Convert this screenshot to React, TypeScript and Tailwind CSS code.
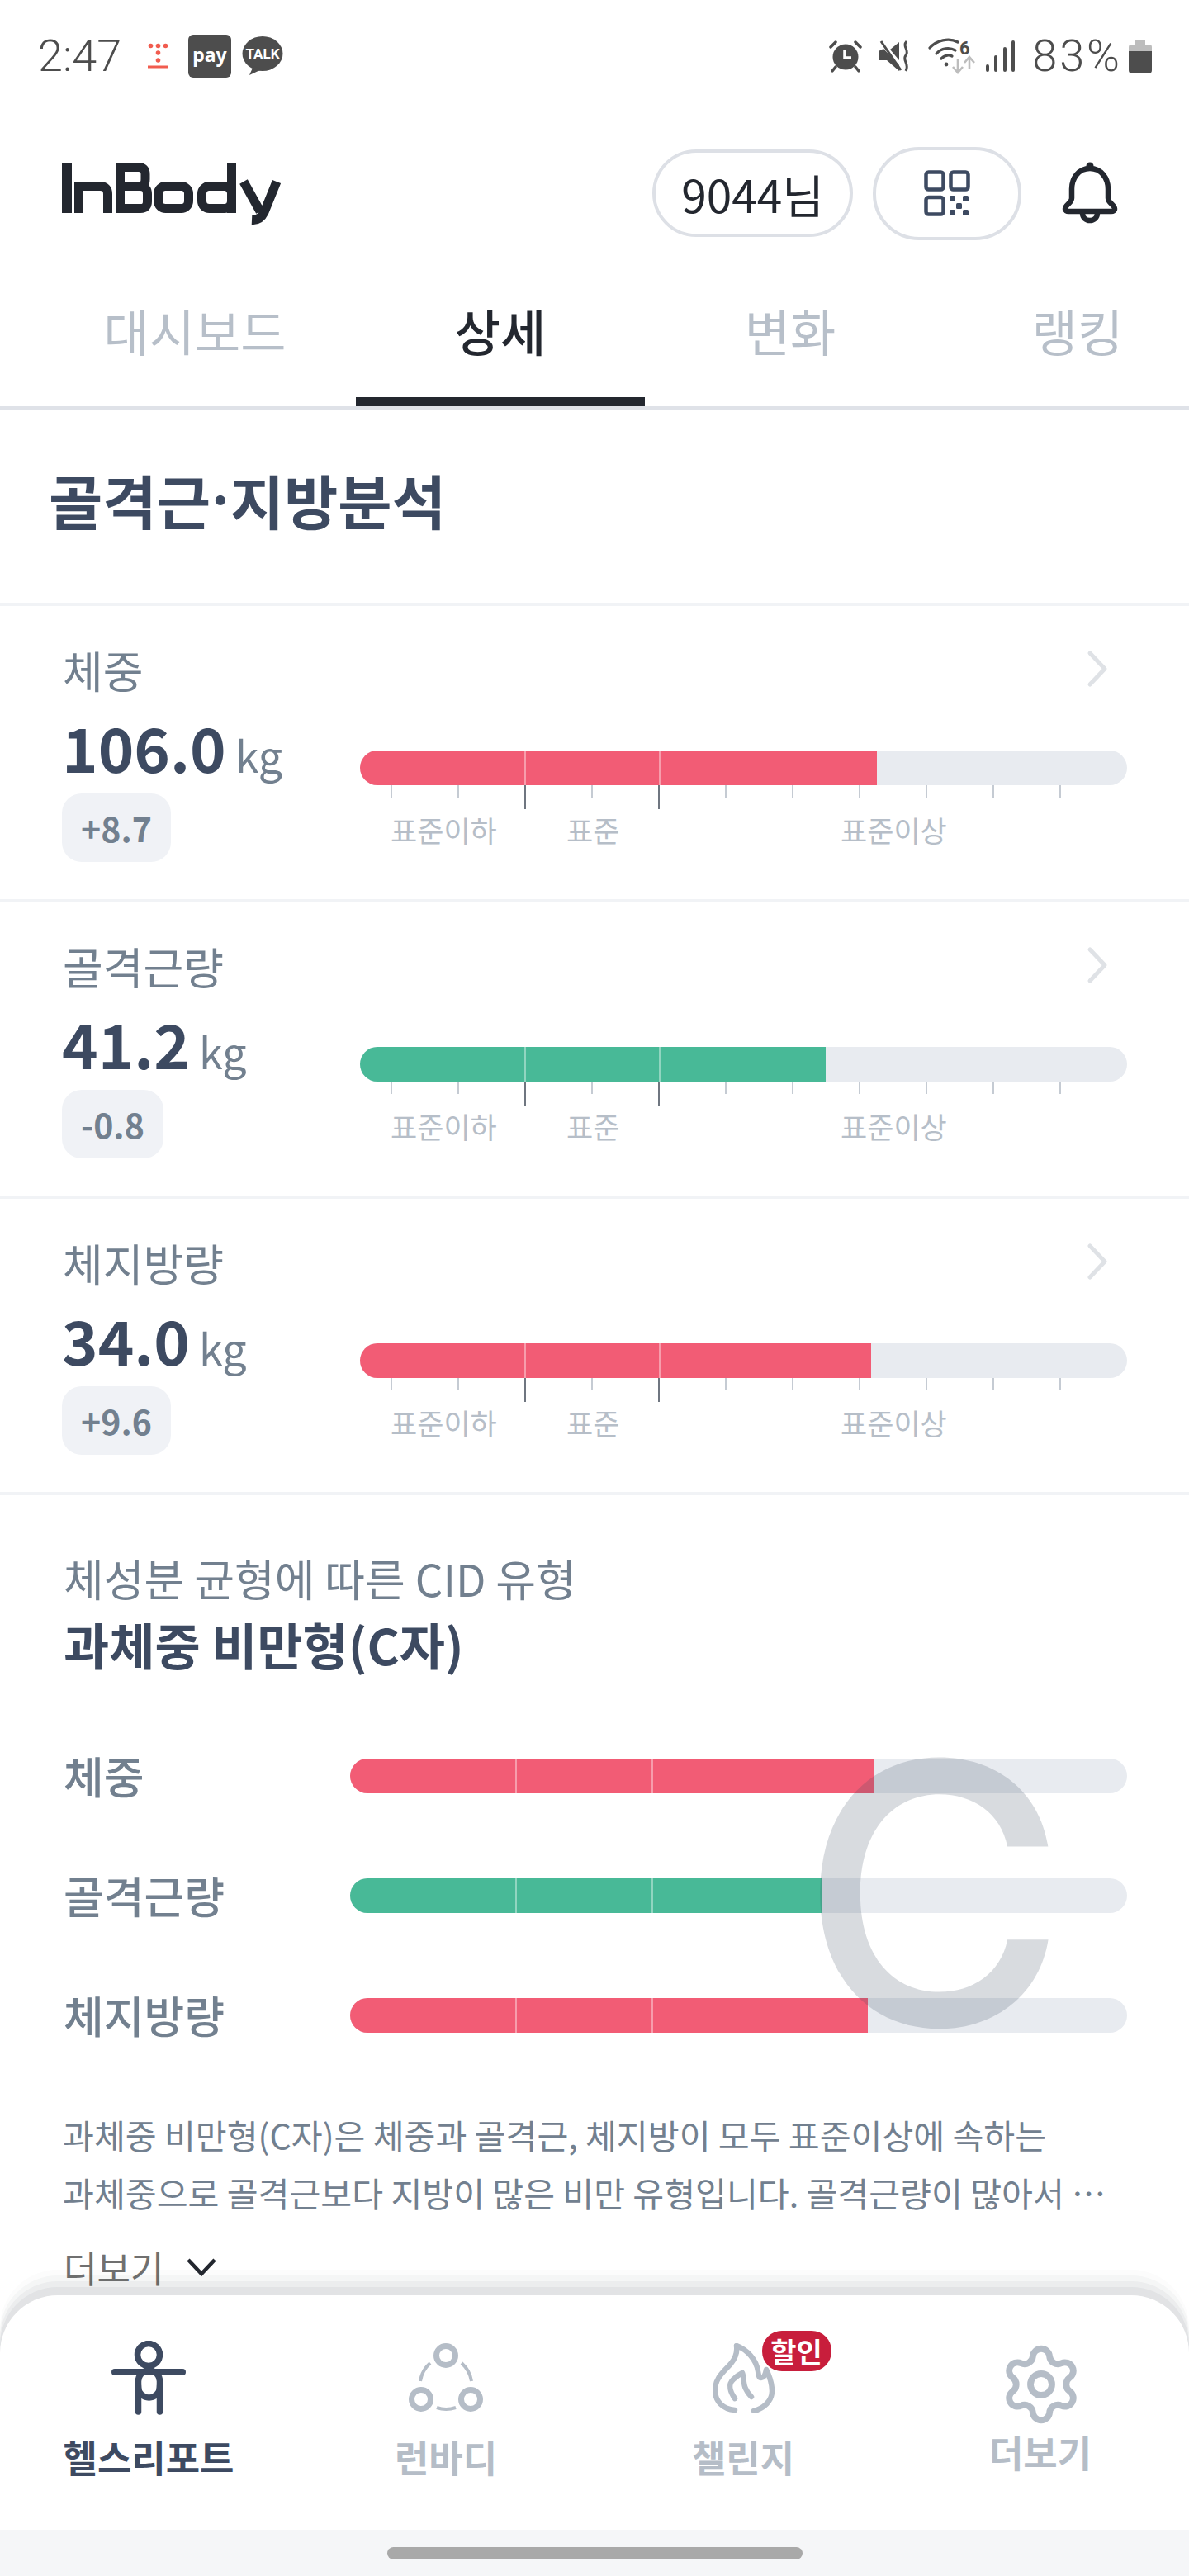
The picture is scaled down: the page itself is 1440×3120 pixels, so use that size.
import { Settings } from "lucide-react";

const rows = [
  { label: "체중", value: "106.0", diff: "+8.7", width: 626, fill: "bg-[#f25c75]" },
  { label: "골격근량", value: "41.2", diff: "-0.8", width: 564, fill: "bg-[#48b997]" },
  { label: "체지방량", value: "34.0", diff: "+9.6", width: 619, fill: "bg-[#f25c75]" },
];

const cidRows = [
  { label: "체중", width: 634, fill: "bg-[#f25c75]" },
  { label: "골격근량", width: 571, fill: "bg-[#48b997]" },
  { label: "체지방량", width: 627, fill: "bg-[#f25c75]" },
];

const ticks = [0, 1, 2, 3, 4, 5, 6, 7, 8, 9, 10];

function StatusBar() {
  return (
    <div className="h-[136px] flex items-center text-[#4d4d4d] font-['Roboto',sans-serif] font-light">
      <span className="ml-[46px] text-[54px] leading-none w-[133px]">2:47</span>
      <svg width="25" height="32" viewBox="0 0 25 32" fill="#f15c4f">
        <circle cx="3.5" cy="3.5" r="2.8" />
        <circle cx="12.5" cy="3.5" r="2.8" />
        <circle cx="21.5" cy="3.5" r="2.8" />
        <circle cx="12.5" cy="12" r="2.8" />
        <circle cx="12.5" cy="21" r="2.8" />
        <rect x="0" y="27.5" width="25" height="3" />
      </svg>
      <div className="ml-[24px] w-[52px] h-[52px] rounded-md bg-[#4d4d4d] flex items-center justify-center text-white text-[23px] font-bold font-['Noto_Sans',sans-serif] pb-[4px]">
        pay
      </div>
      <svg className="ml-[13px]" width="50" height="48" viewBox="0 0 50 48">
        <ellipse cx="25" cy="21" rx="24.5" ry="21" fill="#4d4d4d" />
        <path d="M14 36 L9 47 L24 40 Z" fill="#4d4d4d" />
        <text x="25" y="27" textAnchor="middle" fontSize="17" fontWeight="700" fill="#fff" fontFamily="Roboto, sans-serif">TALK</text>
      </svg>

      <div className="ml-auto flex items-center">
        <svg width="40" height="40" viewBox="0 0 40 40" fill="none" stroke="#4d4d4d">
          <circle cx="20" cy="21" r="15.5" fill="#4d4d4d" stroke="none" />
          <path d="M19 12 V22 H27" stroke="#fff" strokeWidth="3.5" />
          <path d="M2 9 L8 3 M38 9 L32 3 M8 33 L4 38 M32 33 L36 38" strokeWidth="3.5" strokeLinecap="round" />
        </svg>
        <svg className="ml-[20px]" width="40" height="40" viewBox="0 0 40 40" fill="none">
          <path d="M6 11 L0 14 V25 H10 L25 38 V31 Z" fill="#4d4d4d" />
          <path d="M14 12 L25 3 V25 Z" fill="#4d4d4d" />
          <path d="M3 2 L27 37" stroke="#4d4d4d" strokeWidth="3" />
          <path d="M34 2 C28 8 38 13 33 19 C28 25 38 29 33 38" stroke="#4d4d4d" strokeWidth="3" />
        </svg>
        <svg className="ml-[20px]" width="58" height="44" viewBox="0 0 58 44" fill="none">
          <path d="M2 12 C10 3 25 -1 36 5" stroke="#4d4d4d" strokeWidth="3.2" strokeLinecap="round" />
          <path d="M10 19 C16 12 26 11 33 15" stroke="#4d4d4d" strokeWidth="3.2" strokeLinecap="round" />
          <path d="M16 25 C20 21 25 20 29 22" stroke="#4d4d4d" strokeWidth="3.2" strokeLinecap="round" />
          <circle cx="22" cy="32" r="2.4" fill="#4d4d4d" />
          <text x="38" y="20" fontSize="22" fontWeight="700" fill="#4d4d4d" fontFamily="Roboto, sans-serif">6</text>
          <path d="M36 25 V41 M30 35 L36 42 L42 35" stroke="#bdbdbd" strokeWidth="2.6" />
          <path d="M50 38 V24 M44 30 L50 23 L56 30" stroke="#bdbdbd" strokeWidth="2.6" />
        </svg>
        <svg className="ml-[11px]" width="37" height="40" viewBox="0 0 37 40" stroke="#4d4d4d" strokeWidth="4" strokeLinecap="round">
          <path d="M3 32 V37 M13 21 V37 M24 11 V37 M34 3 V37" />
        </svg>
        <span className="ml-[20px] text-[54px] leading-none tracking-[3px]">83%</span>
        <svg className="ml-[8px] mr-[45px]" width="28" height="41" viewBox="0 0 28 41">
          <path d="M8 0 H20 V6 H8 Z M3 6 H25 Q28 6 28 9 V14 H0 V9 Q0 6 3 6 Z" fill="#bdbdbd" />
          <path d="M0 14 H28 V37 Q28 41 24 41 H4 Q0 41 0 37 Z" fill="#4d4d4d" />
        </svg>
      </div>
    </div>
  );
}

function Header() {
  return (
    <div className="h-[196px] flex items-center pl-[75px] pr-[86px]">
      {/* logo */}
      <svg width="266" height="75" viewBox="75 196 266 75" fill="none" stroke="#23272f" strokeWidth="11">
        <rect x="75" y="196" width="12" height="61" fill="#23272f" stroke="none" />
        <path d="M95.5 257 V224.5 H121 Q130.5 224.5 130.5 234 V257" />
        <path d="M145.5 201.5 H168 Q176 201.5 176 210 V216 Q176 224 170 224.5 Q178.5 225 178.5 234 V243 Q178.5 251.5 170 251.5 H145.5 Z M146 224.5 H170" />
        <rect x="191.5" y="224.5" width="37" height="27" rx="9" />
        <rect x="244.5" y="224.5" width="36" height="27" rx="9" />
        <path d="M280.5 196 V257" />
        <path d="M295 219 L315 255 M335 219 L320 256 Q315 266 305 265.5" />
      </svg>
      <div className="ml-auto w-[243px] h-[106px] rounded-[53px] border-4 border-[#dde0e6] flex items-center justify-center text-[55px] text-[#23272f]">
        9044님
      </div>
      <div className="ml-[24px] w-[180px] h-[113px] rounded-[56px] border-4 border-[#dde0e6] flex items-center justify-center">
        <svg width="56" height="56" viewBox="0 0 56 56" fill="none" stroke="#3d4a61" strokeWidth="4.5">
          <rect x="2.5" y="2.5" width="21" height="21" rx="3" />
          <rect x="32.5" y="2.5" width="21" height="21" rx="3" />
          <rect x="2.5" y="33" width="21" height="20.5" rx="3" />
          <g fill="#3d4a61" stroke="none">
            <rect x="31" y="31" width="7" height="7" rx="1.5" />
            <rect x="47" y="31" width="7" height="7" rx="1.5" />
            <rect x="39" y="40" width="7" height="7" rx="1.5" />
            <rect x="31" y="48" width="7" height="7" rx="1.5" />
            <rect x="47" y="48" width="7" height="7" rx="1.5" />
          </g>
        </svg>
      </div>
      <svg className="ml-[49px]" width="68" height="76" viewBox="0 0 68 76" fill="none" stroke="#23272f" strokeWidth="6.5">
        <circle cx="34" cy="5" r="4.5" fill="#23272f" stroke="none" />
        <path d="M34 8 C20 8 12 20 12 33 V44 C12 50 4 52 4 57 C4 59 6 60 8 60 H60 C62 60 64 59 64 57 C64 52 56 50 56 44 V33 C56 20 48 8 34 8 Z" />
        <path d="M25 62 C25 74 43 74 43 62" />
      </svg>
    </div>
  );
}

function Tabs() {
  return (
    <div className="h-[164px] flex overflow-hidden border-b-4 border-[#dfe2e8] pl-[41px] text-[60px] text-[#b7bfc9]">
      <div className="w-[390px] shrink-0 flex items-center justify-center pb-[13px] border-b-[11px] border-transparent">대시보드</div>
      <div className="w-[350px] shrink-0 flex items-center justify-center pb-[13px] border-b-[11px] border-[#23272f] text-[#23272f] font-medium">상세</div>
      <div className="w-[352px] shrink-0 flex items-center justify-center pb-[13px] border-b-[11px] border-transparent">변화</div>
      <div className="w-[344px] shrink-0 flex items-center justify-center pb-[13px] border-b-[11px] border-transparent">랭킹</div>
    </div>
  );
}

function Bar({ total, width, fill, first, second }: { total: string; width: number; fill: string; first: string; second: string }) {
  return (
    <div className={`${total} h-[42px] rounded-full bg-[#e8ebf0] overflow-hidden`}>
      <div className={`${fill} h-full flex`} style={{ width }}>
        <div className={`${first} shrink-0`} />
        <div className="w-[2px] shrink-0 bg-white/40" />
        <div className={`${second} shrink-0`} />
        <div className="w-[2px] shrink-0 bg-white/40" />
      </div>
    </div>
  );
}

function MetricRow({ label, value, diff, width, fill }: (typeof rows)[number]) {
  return (
    <div className="h-[359px] border-b-4 border-[#f1f3f6] flex">
      <div className="w-[436px] shrink-0 pl-[75px] pt-[47px]">
        <div className="text-[53px] leading-[60px] text-[#72808f] pl-[1px]">{label}</div>
        <div className="mt-[23px] h-[80px] flex items-baseline">
          <span className="text-[74px] leading-[80px] font-bold text-[#3d4a61]">{value}</span>
          <span className="ml-[11px] text-[52px] leading-[80px] text-[#72808f]">kg</span>
        </div>
        <div className="mt-[17px] inline-flex h-[83px] items-center px-[23px] rounded-[24px] bg-[#f0f2f6] text-[41px] font-semibold text-[#72808f]">
          {diff}
        </div>
      </div>
      <div className="w-[929px] shrink-0 pt-[53px]">
        <div className="h-[46px] flex justify-end pr-[23px]">
          <svg width="26" height="46" viewBox="0 0 26 46" fill="none" stroke="#dfe2e6" strokeWidth="5" strokeLinecap="round" strokeLinejoin="round">
            <path d="M4 4 L22 23 L4 42" />
          </svg>
        </div>
        <div className="mt-[76px]">
          <Bar total="w-[929px]" width={width} fill={fill} first="w-[199px]" second="w-[161px]" />
        </div>
        <div className="flex pl-[37px] h-[29px]">
          {ticks.map((t) => (
            <div key={t} className="w-[81px] shrink-0">
              {t === 2 || t === 4 ? (
                <div className="w-[2px] h-[29px] bg-[#6f7680]" />
              ) : (
                <div className="w-[2px] h-[15px] bg-[#c5cbd3]" />
              )}
            </div>
          ))}
        </div>
        <div className="mt-[5px] flex pl-[37px] text-[35px] leading-[40px] text-[#b6bec8]">
          <span className="w-[213px] shrink-0">표준이하</span>
          <span className="w-[332px] shrink-0">표준</span>
          <span>표준이상</span>
        </div>
      </div>
    </div>
  );
}

function CidSection() {
  return (
    <div className="pl-[77px] pt-[70px]">
      <div className="text-[53px] leading-[60px] text-[#72808f]">체성분 균형에 따른 CID 유형</div>
      <div className="mt-[15px] text-[60px] leading-[70px] font-bold text-[#3d4a61]">과체중 비만형(C자)</div>
      <div className="relative mt-[104px] flex flex-col gap-[104px]">
        {cidRows.map((r) => (
          <div key={r.label} className="h-[41px] flex items-center">
            <span className="w-[347px] shrink-0 text-[53px] font-medium text-[#72808f]">{r.label}</span>
            <Bar total="w-[941px]" width={r.width} fill={r.fill} first="w-[200px]" second="w-[163px]" />
          </div>
        ))}
        <span className="absolute left-[892px] top-[-137px] text-[440px] leading-[600px] font-medium font-['Inter',sans-serif] text-[#3d4961]/20">C</span>
      </div>
      <div className="mt-[89px] -ml-[1px] text-[41.2px] leading-[70px] text-[#72808f] whitespace-nowrap">
        <div>과체중 비만형(C자)은 체중과 골격근, 체지방이 모두 표준이상에 속하는</div>
        <div>과체중으로 골격근보다 지방이 많은 비만 유형입니다. 골격근량이 많아서 …</div>
      </div>
      <div className="mt-[26px] h-[60px] flex items-center text-[44px] text-[#707070]">
        더보기
        <svg className="ml-[28px]" width="36" height="22" viewBox="0 0 36 22" fill="none" stroke="#23272f" strokeWidth="4.5">
          <path d="M2 2 L18 19 L34 2" />
        </svg>
      </div>
    </div>
  );
}

function BottomNav() {
  return (
    <div className="absolute inset-x-0 bottom-0">
      <div className="h-[284px] grid grid-cols-4 bg-white rounded-t-[70px] shadow-[0_-10px_0_rgba(40,50,70,0.05),0_-17px_0_rgba(40,50,70,0.045),0_-24px_0_rgba(40,50,70,0.03),0_-31px_0_rgba(40,50,70,0.015)]">
        <div className="flex flex-col items-center pt-[50px]">
          <div className="h-[100px] flex items-center">
            <svg width="90" height="90" viewBox="0 0 90 90" fill="none" stroke="#3d4a61" strokeWidth="7.5" strokeLinecap="round">
              <circle cx="45" cy="17" r="13.5" />
              <path d="M4 38 H86" strokeWidth="8" />
              <rect x="32.5" y="36" width="26" height="33" rx="13" />
              <path d="M32.5 55 V86 M58.5 55 V86" />
            </svg>
          </div>
          <div className="mt-[16px] text-[45px] leading-[60px] font-bold text-[#3d4a61]">헬스리포트</div>
        </div>
        <div className="flex flex-col items-center pt-[50px]">
          <div className="h-[100px] flex items-center">
            <svg width="90" height="84" viewBox="0 0 90 84" fill="none" stroke="#b5bdc7" strokeWidth="7">
              <circle cx="45" cy="15" r="11.5" />
              <circle cx="15" cy="68" r="11.5" />
              <circle cx="75" cy="68" r="11.5" />
              <path d="M26 24 Q16 33 14 46 M64 24 Q74 33 76 46 M34 78 Q45 82 57 78" strokeWidth="4" />
            </svg>
          </div>
          <div className="mt-[16px] text-[45px] leading-[60px] font-bold text-[#b5bdc7]">런바디</div>
        </div>
        <div className="flex flex-col items-center pt-[50px]">
          <div className="h-[100px] flex items-center">
            <div className="relative">
              <svg className="block" width="75" height="85" viewBox="0 0 75 85" fill="none" stroke="#b5bdc7" strokeWidth="6.5" strokeLinecap="round" strokeLinejoin="round">
                <path d="M27 81 C12 80 3 70 3 57 C3 42 14 34 22 25 C28 18 30 10 29 3 C42 8 53 20 55 34 C56 40 56 42 59 42 C62 42 64 38 65 32 C69 40 72 49 72 58 C72 70 62 79 50 82" />
                <path d="M27 67 C22 60 18 50 25 44 C30 39 34 37 36 36 C38 40 37 50 40 55 C42 60 44 62 47 65" />
              </svg>
              <div className="absolute left-[60px] top-[-15px] w-[84px] h-[49px] rounded-[24px] bg-[#c81e3c] flex items-center justify-center text-[34px] font-bold text-white">
                할인
              </div>
            </div>
          </div>
          <div className="mt-[16px] text-[45px] leading-[60px] font-bold text-[#b5bdc7]">챌린지</div>
        </div>
        <div className="flex flex-col items-center pt-[62px]">
          <div className="h-[92px] flex items-center pl-[2px]">
            <Settings className="w-[104px] h-[104px] text-[#b5bdc7]" strokeWidth={1.8} />
          </div>
          <div className="mt-[6px] text-[45px] leading-[60px] font-bold text-[#b5bdc7]">더보기</div>
        </div>
      </div>
      <div className="h-[56px] bg-[#f5f6f8] flex items-center justify-center">
        <div className="w-[503px] h-[15px] rounded-full bg-[#a9a9a9]" />
      </div>
    </div>
  );
}

export default function App() {
  return (
    <div className="relative w-[1440px] h-[3120px] overflow-hidden bg-white font-['Noto_Sans_CJK_KR','Noto_Sans',sans-serif]">
      <StatusBar />
      <Header />
      <Tabs />
      <div className="h-[238px] border-b-4 border-[#f1f3f6] flex items-center pl-[59px] pb-[19px] text-[71px] leading-[90px] font-bold text-[#3d4a61]">
        골격근<span className="font-['Inter',sans-serif]">·</span>지방분석
      </div>
      {rows.map((r) => (
        <MetricRow key={r.label} {...r} />
      ))}
      <CidSection />
      <BottomNav />
    </div>
  );
}
